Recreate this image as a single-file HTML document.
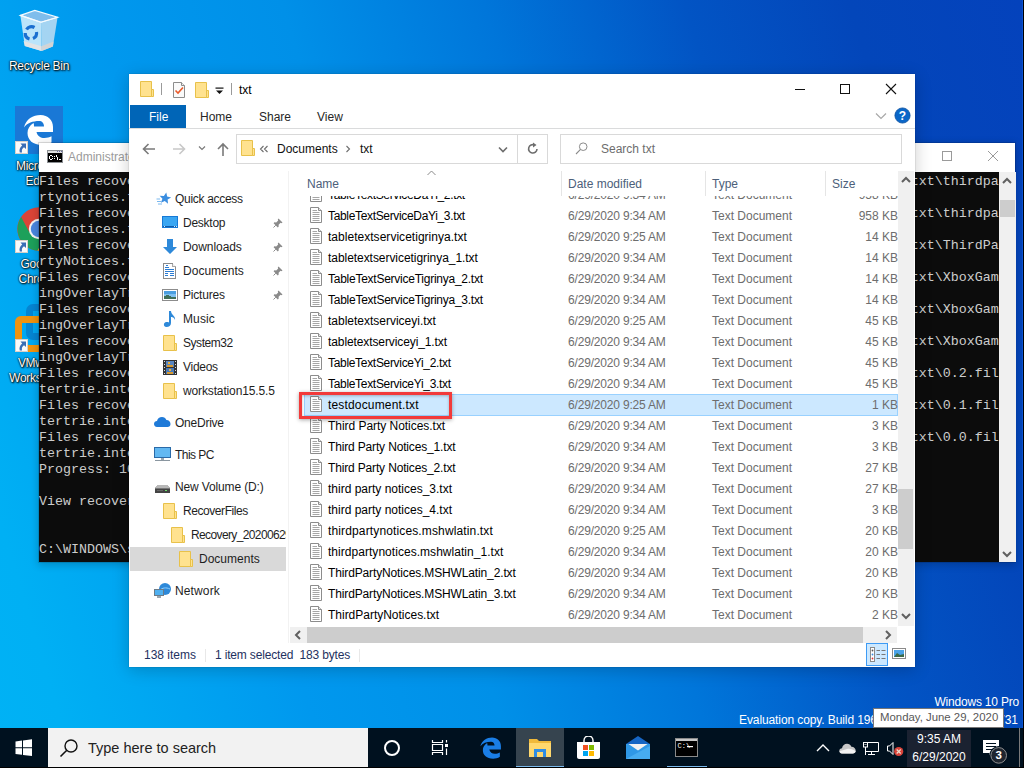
<!DOCTYPE html>
<html><head><meta charset="utf-8"><style>
*{margin:0;padding:0;box-sizing:border-box}
html,body{width:1024px;height:768px;overflow:hidden}
body{position:relative;font-family:"Liberation Sans",sans-serif;font-size:12px;
background:linear-gradient(73deg,#00b2f5 0%,#00b0f4 6%,#0098ee 26%,#0090e8 41%,#0076da 57%,#0254c4 73%,#0346ba 86%,#0442bc 100%);}
.a{position:absolute}
.w{white-space:pre}
.dl{position:absolute;color:#fff;text-align:center;font-size:12px;line-height:15px;letter-spacing:-0.3px;text-shadow:0 0 2px #000,1px 1px 2px #000,0 0 1px #000;width:76px}
</style></head><body>


<svg class="a" style="left:16px;top:6px" width="46" height="48" viewBox="0 0 46 48">
 <path d="M4.4 9.4 L25 16.2 L25.6 45 L8.8 40 Z" fill="#eaf5fc" fill-opacity="0.8"/>
 <path d="M25 16.2 L41.6 11.2 L36.9 40.6 L25.6 45 Z" fill="#d2e4f2" fill-opacity="0.78"/>
 <path d="M4.4 9.4 L18.8 4.4 L41.6 11.2 L25 16.2 Z" fill="#7fbdec" stroke="#f4fbff" stroke-width="1.2"/>
 <path d="M7.6 35 L25.4 40.2 L25.6 45 L8.8 40 Z" fill="#e2e4e6"/>
 <path d="M25.4 40.2 L37.6 35.6 L36.9 40.6 L25.6 45 Z" fill="#d2d4d6"/>
 <path d="M4.4 9.4 L25 16.2 L41.6 11.2" stroke="#f6fbff" stroke-width="1.2" fill="none"/>
 <g stroke="#1a6fd0" stroke-width="3.2" fill="none">
  <path d="M10.5 23.5 A6 6 0 0 1 18.5 21.5"/>
  <path d="M20.5 26 A6 6 0 0 1 17 32.5"/>
  <path d="M13.5 33 A6 6 0 0 1 9.2 27"/>
 </g>
</svg>
<div class="dl" style="left:1px;top:59px">Recycle Bin</div>

<div class="a" style="left:15px;top:106px;width:48px;height:48px;background:#1a78d6"></div>
<svg class="a" style="left:15px;top:106px" width="48" height="48" viewBox="0 0 48 48">
 <path d="M9 21.5 C11 13 18 9 25.5 9 C33 9 38 14 38 21 L38 26 L21.5 26 C22.5 30 25.5 32 29.5 32 C32 32 34.5 31.5 36.5 30.3 L36.5 36.5 C33.5 38.5 30.5 39 27 39 C18 39 12.5 34 12.5 27 C12.5 23 14.5 19.5 18.5 17 C19 18 19 19 19 20.5 L29 20.5 C29 17 27 15 24 15 C18 15 12 17 9 21.5 Z" fill="#fff"/>
</svg>
<div class="a" style="left:15px;top:141px;width:13px;height:13px;background:#fafafa;border:1px solid #d8d0c8"></div><svg class="a" style="left:16px;top:142px" width="11" height="11" viewBox="0 0 11 11"><path d="M4.5 1.5H10V7L8 5.2C6.3 6.3 5.5 8 6 10.5H3.8C3 7.8 3.8 5 6.2 3.4Z" fill="#3a6db5"/></svg>
<div class="dl" style="left:1px;top:159px">Microsoft<br>Edge</div>

<svg class="a" style="left:17px;top:207px" width="44" height="44" viewBox="0 0 44 44">
 <circle cx="22" cy="22" r="21.7" fill="#db4437"/>
 <path d="M4.2 10 L12.2 25 L22 22 L29.5 29 L20.5 43.6 A21.7 21.7 0 0 1 4.2 10 Z" fill="#1da05a"/>
 <path d="M20.5 43.6 L29.5 29 L22 22 L24.3 12.1 L41.5 12.5 A21.7 21.7 0 0 1 20.5 43.6 Z" fill="#fcc934"/>
 <circle cx="22" cy="22" r="10.2" fill="#f4f4f4"/><circle cx="22" cy="22" r="8.2" fill="#4a86e0"/>
</svg>
<div class="a" style="left:15px;top:240px;width:13px;height:13px;background:#fafafa;border:1px solid #d8d0c8"></div><svg class="a" style="left:16px;top:241px" width="11" height="11" viewBox="0 0 11 11"><path d="M4.5 1.5H10V7L8 5.2C6.3 6.3 5.5 8 6 10.5H3.8C3 7.8 3.8 5 6.2 3.4Z" fill="#3a6db5"/></svg>
<div class="dl" style="left:1px;top:257px">Google<br>Chrome</div>

<div class="a" style="left:26px;top:304px;width:36px;height:36px;border-radius:7px;border:7px solid rgba(10,90,170,.45)"></div>
<div class="a" style="left:15px;top:316px;width:36px;height:36px;border-radius:6px;border:7px solid #f0930f"></div>
<div class="a" style="left:15px;top:339px;width:13px;height:13px;background:#fafafa;border:1px solid #d8d0c8"></div><svg class="a" style="left:16px;top:340px" width="11" height="11" viewBox="0 0 11 11"><path d="M4.5 1.5H10V7L8 5.2C6.3 6.3 5.5 8 6 10.5H3.8C3 7.8 3.8 5 6.2 3.4Z" fill="#3a6db5"/></svg>
<div class="dl" style="left:1px;top:356px">VMware<br>Workstation</div>


<div class="a" style="left:38px;top:142px;width:978px;height:421px;background:#fff;background-clip:padding-box;border:1px solid rgba(0,0,0,.12);box-shadow:0 2px 8px rgba(0,0,0,.2)">
</div>
<svg class="a" style="left:47px;top:150px" width="16" height="13" viewBox="0 0 16 13" shape-rendering="crispEdges"><rect x="0" y="0" width="16" height="13" fill="#8a8e92"/><rect x="1" y="1" width="14" height="2" fill="#dcdcdc"/><rect x="10" y="1" width="1" height="1" fill="#6a6aa8"/><rect x="12" y="1" width="1" height="1" fill="#6a6aa8"/><rect x="14" y="1" width="1" height="1" fill="#6a6aa8"/><rect x="1" y="3" width="14" height="9" fill="#000"/><g fill="#fff"><rect x="3" y="5" width="2" height="1"/><rect x="2" y="6" width="1" height="3"/><rect x="3" y="9" width="2" height="1"/><rect x="5" y="6" width="1" height="1"/><rect x="5" y="8" width="1" height="1"/><rect x="7" y="6" width="1" height="1"/><rect x="7" y="8" width="1" height="1"/><rect x="9" y="5" width="1" height="2"/><rect x="10" y="7" width="1" height="3"/><rect x="12" y="9" width="2" height="1"/></g></svg>
<div class="a w" style="left:68px;top:149px;font-size:12px;color:#9b9b9b;line-height:17px">Administrator: C:\WINDOWS\system32\cmd.exe - recover.exe</div>
<div class="a" style="left:942px;top:151px;width:10px;height:10px;border:1px solid #9a9a9a"></div>
<svg class="a" style="left:987px;top:150px" width="12" height="12" viewBox="0 0 12 12"><path d="M1 1L11 11M11 1L1 11" stroke="#9a9a9a" stroke-width="1"/></svg>
<div class="a" style="left:39px;top:172px;width:960px;height:390px;background:#0c0c0c;overflow:hidden">
<div class="a w" style="left:0;top:2px;font-family:'Liberation Mono',monospace;font-size:13.33px;line-height:16px;color:#cccccc">Files recovered: D:\RecoverFiles\Recovery_20200629\Documents\xxxxxxxxxxxxxxxxxxxxxxxxxxxxxxxxxxxxxxxxxxxxxxxxtxt\thirdpa
rtynotices.txt
Files recovered: D:\RecoverFiles\Recovery_20200629\Documents\xxxxxxxxxxxxxxxxxxxxxxxxxxxxxxxxxxxxxxxxxxxxxxxxtxt\thirdpa
rtynotices.txt
Files recovered: D:\RecoverFiles\Recovery_20200629\Documents\xxxxxxxxxxxxxxxxxxxxxxxxxxxxxxxxxxxxxxxxxxxxxxxxtxt\ThirdPa
rtyNotices.txt
Files recovered: D:\RecoverFiles\Recovery_20200629\Documents\xxxxxxxxxxxxxxxxxxxxxxxxxxxxxxxxxxxxxxxxxxxxxxxxtxt\XboxGam
ingOverlayTrace.txt
Files recovered: D:\RecoverFiles\Recovery_20200629\Documents\xxxxxxxxxxxxxxxxxxxxxxxxxxxxxxxxxxxxxxxxxxxxxxxxtxt\XboxGam
ingOverlayTrace_1.txt
Files recovered: D:\RecoverFiles\Recovery_20200629\Documents\xxxxxxxxxxxxxxxxxxxxxxxxxxxxxxxxxxxxxxxxxxxxxxxxtxt\XboxGam
ingOverlayTrace_2.txt
Files recovered: D:\RecoverFiles\Recovery_20200629\Documents\xxxxxxxxxxxxxxxxxxxxxxxxxxxxxxxxxxxxxxxxxxxxxxxxtxt\0.2.fil
tertrie.intermediate.txt
Files recovered: D:\RecoverFiles\Recovery_20200629\Documents\xxxxxxxxxxxxxxxxxxxxxxxxxxxxxxxxxxxxxxxxxxxxxxxxtxt\0.1.fil
tertrie.intermediate.txt
Files recovered: D:\RecoverFiles\Recovery_20200629\Documents\xxxxxxxxxxxxxxxxxxxxxxxxxxxxxxxxxxxxxxxxxxxxxxxxtxt\0.0.fil
tertrie.intermediate.txt
Progress: 100%

View recovered files in D:\RecoverFiles


C:\WINDOWS\system32&gt;
</div></div>
<div class="a" style="left:999px;top:172px;width:17px;height:390px;background:#f0f0f0"></div>
<svg class="a" style="left:1002px;top:177px" width="10" height="8" viewBox="0 0 10 8"><path d="M1 6L5 2L9 6" stroke="#606060" stroke-width="2" fill="none"/></svg>
<div class="a" style="left:1000px;top:200px;width:15px;height:17px;background:#cdcdcd"></div>
<svg class="a" style="left:1002px;top:550px" width="10" height="8" viewBox="0 0 10 8"><path d="M1 2L5 6L9 2" stroke="#606060" stroke-width="2" fill="none"/></svg>


<div class="a" style="left:129px;top:74px;width:786px;height:593px;background:#fff;box-shadow:0 0 1px rgba(0,0,0,.35),0 3px 16px rgba(0,0,0,.2)"></div>

<div class="a" style="left:140px;top:81px"><svg width="14" height="16" viewBox="0 0 14 16"><path d="M0.5 0.5H11.5V15.5H0.5Z" fill="#ffe28f" stroke="#e8c14a"/><path d="M11.5 8.5H13.5V15.5H11.5Z" fill="#ffe28f" stroke="#e8c14a"/></svg></div>
<div class="a" style="left:161px;top:83px;width:1px;height:12px;background:#9a9a9a"></div>
<svg class="a" style="left:173px;top:82px" width="12" height="16" viewBox="0 0 12 16"><path d="M0.5 0.5H8.5L11.5 3.5V15.5H0.5Z" fill="#fafafa" stroke="#8c8c8c"/><path d="M8.5 0.5V3.5H11.5" fill="#eee" stroke="#8c8c8c"/><path d="M2.5 8.5L5 11L10 5.5" stroke="#ea5a2a" stroke-width="1.6" fill="none"/></svg>
<div class="a" style="left:195px;top:82px"><svg width="14" height="16" viewBox="0 0 14 16"><path d="M0.5 0.5H11.5V15.5H0.5Z" fill="#ffe28f" stroke="#e8c14a"/><path d="M11.5 8.5H13.5V15.5H11.5Z" fill="#ffe28f" stroke="#e8c14a"/></svg></div>
<svg class="a" style="left:215px;top:87px" width="9" height="8" viewBox="0 0 9 8"><rect x="0.5" y="0.5" width="8" height="1.2" fill="#111"/><path d="M1 3.5H8L4.5 7Z" fill="#111"/></svg>
<div class="a" style="left:231px;top:83px;width:1px;height:12px;background:#9a9a9a"></div>
<div class="a w" style="left:239px;top:82px;font-size:12px;line-height:17px;color:#000">txt</div>
<div class="a" style="left:795px;top:89px;width:10px;height:1px;background:#111"></div>
<div class="a" style="left:840px;top:84px;width:10px;height:10px;border:1px solid #111"></div>
<svg class="a" style="left:885px;top:83px" width="12" height="12" viewBox="0 0 12 12"><path d="M1 1L11 11M11 1L1 11" stroke="#111" stroke-width="1.1"/></svg>
<div class="a" style="left:130px;top:105px;width:56px;height:23px;background:#0065b7"></div>
<div class="a w" style="left:149px;top:109px;color:#fff;line-height:17px">File</div>
<div class="a w" style="left:200px;top:109px;color:#262626;line-height:17px">Home</div>
<div class="a w" style="left:259px;top:109px;color:#262626;line-height:17px">Share</div>
<div class="a w" style="left:317px;top:109px;color:#262626;line-height:17px">View</div>
<svg class="a" style="left:875px;top:112px" width="12" height="8" viewBox="0 0 12 8"><path d="M1 1.5L6 6.5L11 1.5" stroke="#a8a8a8" stroke-width="1.2" fill="none"/></svg>
<svg class="a" style="left:894px;top:107px" width="17" height="17" viewBox="0 0 17 17"><circle cx="8.5" cy="8.5" r="7.6" fill="#0a66c8" stroke="#0a4f9e" stroke-width="0.8"/><text x="8.5" y="13" text-anchor="middle" font-family="Liberation Sans" font-weight="bold" font-size="12" fill="#fff">?</text></svg>
<div class="a" style="left:129px;top:128px;width:786px;height:1px;background:#dadbdc"></div>
<svg class="a" style="left:141px;top:141px" width="16" height="16" viewBox="0 0 16 16"><path d="M14 8H2.5M7.5 3L2.5 8L7.5 13" stroke="#7a7a7a" stroke-width="1.6" fill="none"/></svg>
<svg class="a" style="left:171px;top:141px" width="16" height="16" viewBox="0 0 16 16"><path d="M2 8H13.5M8.5 3L13.5 8L8.5 13" stroke="#c8c8c8" stroke-width="1.6" fill="none"/></svg>
<svg class="a" style="left:198px;top:145px" width="8" height="6" viewBox="0 0 8 6"><path d="M1 1.5L4 4.5L7 1.5" stroke="#7a7a7a" stroke-width="1.2" fill="none"/></svg>
<svg class="a" style="left:215px;top:142px" width="16" height="16" viewBox="0 0 16 16"><path d="M8 14V2M3 7L8 2L13 7" stroke="#7a7a7a" stroke-width="1.6" fill="none"/></svg>
<div class="a" style="left:236px;top:134px;width:312px;height:30px;border:1px solid #d9d9d9"></div>
<div class="a" style="left:517px;top:135px;width:1px;height:28px;background:#d9d9d9"></div>
<div class="a" style="left:241px;top:140px"><svg width="14" height="16" viewBox="0 0 14 16"><path d="M0.5 0.5H11.5V15.5H0.5Z" fill="#ffe28f" stroke="#e8c14a"/><path d="M11.5 8.5H13.5V15.5H11.5Z" fill="#ffe28f" stroke="#e8c14a"/></svg></div>
<svg class="a" style="left:259px;top:145px" width="10" height="8" viewBox="0 0 10 8"><path d="M4.5 1L1.5 4L4.5 7M8.5 1L5.5 4L8.5 7" stroke="#6d6d6d" stroke-width="1.1" fill="none"/></svg>
<div class="a w" style="left:277px;top:141px;color:#111;line-height:17px">Documents</div>
<svg class="a" style="left:345px;top:145px" width="6" height="8" viewBox="0 0 6 8"><path d="M1.5 1L4.5 4L1.5 7" stroke="#6d6d6d" stroke-width="1.1" fill="none"/></svg>
<div class="a w" style="left:360px;top:141px;color:#111;line-height:17px">txt</div>
<svg class="a" style="left:498px;top:146px" width="10" height="7" viewBox="0 0 10 7"><path d="M1 1.5L5 5.5L9 1.5" stroke="#6d6d6d" stroke-width="1.6" fill="none"/></svg>
<svg class="a" style="left:526px;top:142px" width="14" height="14" viewBox="0 0 14 14"><path d="M11 7A4.2 4.2 0 1 1 8.5 3" stroke="#6d6d6d" stroke-width="1.6" fill="none"/><path d="M7 0.5L10.5 3L7 5.5Z" fill="#6d6d6d"/></svg>
<div class="a" style="left:560px;top:134px;width:342px;height:30px;border:1px solid #d9d9d9"></div>
<svg class="a" style="left:575px;top:141px" width="14" height="14" viewBox="0 0 14 14"><circle cx="8.2" cy="5.7" r="3.8" stroke="#8a8a8a" stroke-width="1" fill="none"/><path d="M5.5 8.4L1 13" stroke="#8a8a8a" stroke-width="1.1"/></svg>
<div class="a w" style="left:601px;top:141px;color:#6d6d6d;line-height:17px">Search txt</div>
<div class="a" style="left:130px;top:547px;width:156px;height:24px;background:#d9d9d9"></div>
<div class="a" style="left:129px;top:171px;width:157px;height:472px;overflow:hidden">
<div class="a w" style="left:46px;top:20px;color:#1e1e1e;line-height:17px;letter-spacing:-0.306px">Quick access</div>
<svg class="a" style="left:27px;top:21px" width="16" height="14" viewBox="0 0 16 14"><path d="M9.5 0.3L10.9 4.3L15 4.6L11.8 7.2L12.8 11.3L9.2 9L5.6 11.3L6.6 7.2L3.4 4.6L7.6 4.3Z" fill="#3b8ee0" transform="rotate(8 9 6)"/><path d="M0.5 7H4M1 9.5H5M2 12H6" stroke="#7ab8ee" stroke-width="1"/></svg>
<div class="a w" style="left:54px;top:44px;color:#1e1e1e;line-height:17px;letter-spacing:-0.247px">Desktop</div>
<svg class="a" style="left:33px;top:45px" width="16" height="12" viewBox="0 0 16 12" shape-rendering="crispEdges"><rect x="0" y="0" width="16" height="12" fill="#1679d6"/><rect x="1" y="1" width="14" height="9" fill="#3aa6f2"/><rect x="1" y="10" width="14" height="1" fill="#0f5aa8"/><rect x="2" y="10" width="1" height="1" fill="#cfe8ff"/><rect x="12" y="10" width="1" height="1" fill="#cfe8ff"/><rect x="14" y="10" width="1" height="1" fill="#cfe8ff"/></svg>
<svg class="a" style="left:144px;top:47px" width="10" height="10" viewBox="0 0 10 10"><path d="M5.5 0.5L9.5 4.5L8.5 5.2L7.6 4.8L5.6 6.8L5.7 8.6L4.8 9.4L0.6 5.2L1.4 4.3L3.2 4.4L5.2 2.4L4.8 1.5Z" fill="#8a8a8a"/><path d="M2.8 7.2L0.5 9.5" stroke="#8a8a8a"/></svg>
<div class="a w" style="left:54px;top:68px;color:#1e1e1e;line-height:17px;letter-spacing:-0.065px">Downloads</div>
<svg class="a" style="left:33px;top:68px" width="16" height="16" viewBox="0 0 16 16"><path d="M5 0H11V8H15L8 15L1 8H5Z" fill="#2e89d9"/></svg>
<svg class="a" style="left:144px;top:71px" width="10" height="10" viewBox="0 0 10 10"><path d="M5.5 0.5L9.5 4.5L8.5 5.2L7.6 4.8L5.6 6.8L5.7 8.6L4.8 9.4L0.6 5.2L1.4 4.3L3.2 4.4L5.2 2.4L4.8 1.5Z" fill="#8a8a8a"/><path d="M2.8 7.2L0.5 9.5" stroke="#8a8a8a"/></svg>
<div class="a w" style="left:54px;top:92px;color:#1e1e1e;line-height:17px;letter-spacing:0.022px">Documents</div>
<svg class="a" style="left:34px;top:92px" width="13" height="16" viewBox="0 0 13 16" shape-rendering="crispEdges"><path d="M0.5 0.5H9.5L12.5 3.5V15.5H0.5Z" fill="#fff" stroke="#8c8c8c"/><path d="M9.5 0.5V3.5H12.5" fill="#eee" stroke="#aaa"/><path d="M3 2.5H5M2 4.5H6M2 6.5H11M2 8.5H11M2 10.5H5M7 10.5H11M2 12.5H5M7 12.5H11" stroke="#2b7cd3"/></svg>
<svg class="a" style="left:144px;top:95px" width="10" height="10" viewBox="0 0 10 10"><path d="M5.5 0.5L9.5 4.5L8.5 5.2L7.6 4.8L5.6 6.8L5.7 8.6L4.8 9.4L0.6 5.2L1.4 4.3L3.2 4.4L5.2 2.4L4.8 1.5Z" fill="#8a8a8a"/><path d="M2.8 7.2L0.5 9.5" stroke="#8a8a8a"/></svg>
<div class="a w" style="left:54px;top:116px;color:#1e1e1e;line-height:17px;letter-spacing:-0.207px">Pictures</div>
<svg class="a" style="left:33px;top:118px" width="16" height="12" viewBox="0 0 16 12" shape-rendering="crispEdges"><rect x="0.5" y="0.5" width="15" height="11" fill="#fff" stroke="#8c8c8c"/><rect x="2" y="2" width="12" height="8" fill="#7fc0f0"/><rect x="2" y="2" width="12" height="3" fill="#4a9ee0"/><path d="M2 10V7L6 6L10 8L14 8V10Z" fill="#3f6f5a"/></svg>
<svg class="a" style="left:144px;top:119px" width="10" height="10" viewBox="0 0 10 10"><path d="M5.5 0.5L9.5 4.5L8.5 5.2L7.6 4.8L5.6 6.8L5.7 8.6L4.8 9.4L0.6 5.2L1.4 4.3L3.2 4.4L5.2 2.4L4.8 1.5Z" fill="#8a8a8a"/><path d="M2.8 7.2L0.5 9.5" stroke="#8a8a8a"/></svg>
<div class="a w" style="left:54px;top:140px;color:#1e1e1e;line-height:17px;letter-spacing:0.112px">Music</div>
<svg class="a" style="left:34px;top:140px" width="14" height="16" viewBox="0 0 14 16"><path d="M6 0H8C8 4 13 5 12 9C11 6 9 6 8 6V12C8 14.5 6 16 3.5 16C1.5 16 0.5 14.5 1 13C1.5 11 4 10.5 6 11.5Z" fill="#2e89d9"/></svg>
<div class="a w" style="left:54px;top:164px;color:#1e1e1e;line-height:17px;letter-spacing:-0.445px">System32</div>
<div class="a" style="left:34px;top:164px"><svg width="14" height="16" viewBox="0 0 14 16"><path d="M0.5 0.5H11.5V15.5H0.5Z" fill="#ffe28f" stroke="#e8c14a"/><path d="M11.5 8.5H13.5V15.5H11.5Z" fill="#ffe28f" stroke="#e8c14a"/></svg></div>
<div class="a w" style="left:54px;top:188px;color:#1e1e1e;line-height:17px;letter-spacing:-0.281px">Videos</div>
<svg class="a" style="left:34px;top:189px" width="14" height="15" viewBox="0 0 14 15" shape-rendering="crispEdges"><rect x="0" y="0" width="14" height="15" fill="#333"/><path d="M1 1.5H2M1 4.5H2M1 7.5H2M1 10.5H2M1 13.5H2M12 1.5H13M12 4.5H13M12 7.5H13M12 10.5H13M12 13.5H13" stroke="#ddd"/><rect x="3" y="1" width="8" height="6" fill="#5a86c0"/><rect x="3" y="8" width="8" height="6" fill="#4a7ab8"/><path d="M4 5H10V7H4Z M4 12H10V14H4Z" fill="#d89a30"/><rect x="5" y="2" width="2" height="2" fill="#e8b040"/><rect x="6" y="9" width="2" height="2" fill="#e8b040"/></svg>
<div class="a w" style="left:54px;top:212px;color:#1e1e1e;line-height:17px;letter-spacing:-0.137px">workstation15.5.5</div>
<div class="a" style="left:34px;top:212px"><svg width="14" height="16" viewBox="0 0 14 16"><path d="M0.5 0.5H11.5V15.5H0.5Z" fill="#ffe28f" stroke="#e8c14a"/><path d="M11.5 8.5H13.5V15.5H11.5Z" fill="#ffe28f" stroke="#e8c14a"/></svg></div>
<div class="a w" style="left:46px;top:244px;color:#1e1e1e;line-height:17px;letter-spacing:-0.237px">OneDrive</div>
<svg class="a" style="left:25px;top:245px" width="17" height="11" viewBox="0 0 17 11"><path d="M3 11C1 11 0 9.5 0 8C0 6.3 1.4 5 3 5C3.5 2.5 5.5 1 8 1C10 1 11.7 2.2 12.4 4C15 4 16.5 6 16.5 8C16.5 9.8 15.3 11 13.5 11Z" fill="#1f7ad8"/></svg>
<div class="a w" style="left:46px;top:276px;color:#1e1e1e;line-height:17px;letter-spacing:-0.526px">This PC</div>
<svg class="a" style="left:25px;top:276px" width="17" height="16" viewBox="0 0 17 16" shape-rendering="crispEdges"><rect x="0.5" y="0.5" width="16" height="10" fill="#62b8f2" stroke="#2a6aa8"/><rect x="7" y="11" width="3" height="2" fill="#9aa6b0"/><rect x="1" y="13" width="15" height="1" fill="#8a96a0"/></svg>
<div class="a w" style="left:46px;top:308px;color:#1e1e1e;line-height:17px;letter-spacing:-0.134px">New Volume (D:)</div>
<svg class="a" style="left:26px;top:314px" width="15" height="8" viewBox="0 0 15 8" shape-rendering="crispEdges"><path d="M2 0H13L15 3V8H0V3Z" fill="#b8b8b8"/><rect x="0" y="3" width="15" height="5" fill="#444"/><rect x="0" y="3" width="15" height="1" fill="#777"/><rect x="10" y="5" width="2" height="1" fill="#6ee06a"/><rect x="2" y="5" width="6" height="1" fill="#666"/></svg>
<div class="a w" style="left:54px;top:332px;color:#1e1e1e;line-height:17px;letter-spacing:-0.436px">RecoverFiles</div>
<div class="a" style="left:34px;top:332px"><svg width="14" height="16" viewBox="0 0 14 16"><path d="M0.5 0.5H11.5V15.5H0.5Z" fill="#ffe28f" stroke="#e8c14a"/><path d="M11.5 8.5H13.5V15.5H11.5Z" fill="#ffe28f" stroke="#e8c14a"/></svg></div>
<div class="a w" style="left:62px;top:356px;color:#1e1e1e;line-height:17px;letter-spacing:-0.625px">Recovery_20200629_093218</div>
<div class="a" style="left:42px;top:356px"><svg width="14" height="16" viewBox="0 0 14 16"><path d="M0.5 0.5H11.5V15.5H0.5Z" fill="#ffe28f" stroke="#e8c14a"/><path d="M11.5 8.5H13.5V15.5H11.5Z" fill="#ffe28f" stroke="#e8c14a"/></svg></div>
<div class="a w" style="left:70px;top:380px;color:#1e1e1e;line-height:17px;letter-spacing:0.011px">Documents</div>
<div class="a" style="left:50px;top:380px"><svg width="14" height="16" viewBox="0 0 14 16"><path d="M0.5 0.5H11.5V15.5H0.5Z" fill="#ffe28f" stroke="#e8c14a"/><path d="M11.5 8.5H13.5V15.5H11.5Z" fill="#ffe28f" stroke="#e8c14a"/></svg></div>
<div class="a w" style="left:46px;top:412px;color:#1e1e1e;line-height:17px;letter-spacing:0.126px">Network</div>
<svg class="a" style="left:25px;top:412px" width="17" height="16" viewBox="0 0 17 16"><circle cx="11" cy="6" r="6" fill="#2e89d9"/><path d="M6 7C8 5 12 4 16 6" stroke="#8fd0ff" fill="none"/><rect x="0.5" y="6.5" width="9" height="6" fill="#4fb0f0" stroke="#6b7b88"/><rect x="3" y="13" width="4" height="2" fill="#9aa6b0"/></svg>
</div>
<div class="a" style="left:288px;top:171px;width:1px;height:472px;background:#f2f2f2"></div>
<svg class="a" style="left:427px;top:170px" width="9" height="6" viewBox="0 0 9 6"><path d="M0.5 5L4.5 1L8.5 5" stroke="#8a8a8a" stroke-width="1" fill="none"/></svg>
<div class="a w" style="left:307px;top:176px;color:#4c607a;line-height:17px">Name</div>
<div class="a w" style="left:568px;top:176px;color:#4c607a;line-height:17px">Date modified</div>
<div class="a w" style="left:712px;top:176px;color:#4c607a;line-height:17px">Type</div>
<div class="a w" style="left:832px;top:176px;color:#4c607a;line-height:17px">Size</div>
<div class="a" style="left:561px;top:171px;width:1px;height:25px;background:#e5e5e5"></div>
<div class="a" style="left:705px;top:171px;width:1px;height:25px;background:#e5e5e5"></div>
<div class="a" style="left:825px;top:171px;width:1px;height:25px;background:#e5e5e5"></div>
<div class="a" style="left:290px;top:196px;width:608px;height:431px;overflow:hidden">
<div class="a" style="left:20px;top:-10px"><svg width="12" height="16" viewBox="0 0 12 16"><path d="M0.5 0.5H8.5L11.5 3.5V15.5H0.5Z" fill="#fff" stroke="#8c8c8c"/><path d="M8.5 0.5V3.5H11.5" fill="#e6e6e6" stroke="#8c8c8c"/><path d="M2.5 3.5H7M2.5 5.5H9.5M2.5 7.5H9.5M2.5 9.5H9.5M2.5 11.5H9.5M2.5 13.5H9.5" stroke="#a6a6a6"/></svg></div>
<div class="a w" style="left:38px;top:-9px;color:#000;line-height:17px;letter-spacing:-0.337px">TableTextServiceDaYi_2.txt</div>
<div class="a w" style="left:278px;top:-9px;color:#6d6d6d;line-height:17px;letter-spacing:-0.18px">6/29/2020 9:34 AM</div>
<div class="a w" style="left:422px;top:-9px;color:#6d6d6d;line-height:17px">Text Document</div>
<div class="a w" style="left:508px;top:-9px;width:100px;text-align:right;color:#6d6d6d;line-height:17px">958 KB</div>
<div class="a" style="left:20px;top:11px"><svg width="12" height="16" viewBox="0 0 12 16"><path d="M0.5 0.5H8.5L11.5 3.5V15.5H0.5Z" fill="#fff" stroke="#8c8c8c"/><path d="M8.5 0.5V3.5H11.5" fill="#e6e6e6" stroke="#8c8c8c"/><path d="M2.5 3.5H7M2.5 5.5H9.5M2.5 7.5H9.5M2.5 9.5H9.5M2.5 11.5H9.5M2.5 13.5H9.5" stroke="#a6a6a6"/></svg></div>
<div class="a w" style="left:38px;top:12px;color:#000;line-height:17px;letter-spacing:-0.337px">TableTextServiceDaYi_3.txt</div>
<div class="a w" style="left:278px;top:12px;color:#6d6d6d;line-height:17px;letter-spacing:-0.18px">6/29/2020 9:34 AM</div>
<div class="a w" style="left:422px;top:12px;color:#6d6d6d;line-height:17px">Text Document</div>
<div class="a w" style="left:508px;top:12px;width:100px;text-align:right;color:#6d6d6d;line-height:17px">958 KB</div>
<div class="a" style="left:20px;top:32px"><svg width="12" height="16" viewBox="0 0 12 16"><path d="M0.5 0.5H8.5L11.5 3.5V15.5H0.5Z" fill="#fff" stroke="#8c8c8c"/><path d="M8.5 0.5V3.5H11.5" fill="#e6e6e6" stroke="#8c8c8c"/><path d="M2.5 3.5H7M2.5 5.5H9.5M2.5 7.5H9.5M2.5 9.5H9.5M2.5 11.5H9.5M2.5 13.5H9.5" stroke="#a6a6a6"/></svg></div>
<div class="a w" style="left:38px;top:33px;color:#000;line-height:17px;letter-spacing:0.029px">tabletextservicetigrinya.txt</div>
<div class="a w" style="left:278px;top:33px;color:#6d6d6d;line-height:17px;letter-spacing:-0.18px">6/29/2020 9:25 AM</div>
<div class="a w" style="left:422px;top:33px;color:#6d6d6d;line-height:17px">Text Document</div>
<div class="a w" style="left:508px;top:33px;width:100px;text-align:right;color:#6d6d6d;line-height:17px">14 KB</div>
<div class="a" style="left:20px;top:53px"><svg width="12" height="16" viewBox="0 0 12 16"><path d="M0.5 0.5H8.5L11.5 3.5V15.5H0.5Z" fill="#fff" stroke="#8c8c8c"/><path d="M8.5 0.5V3.5H11.5" fill="#e6e6e6" stroke="#8c8c8c"/><path d="M2.5 3.5H7M2.5 5.5H9.5M2.5 7.5H9.5M2.5 9.5H9.5M2.5 11.5H9.5M2.5 13.5H9.5" stroke="#a6a6a6"/></svg></div>
<div class="a w" style="left:38px;top:54px;color:#000;line-height:17px;letter-spacing:-0.052px">tabletextservicetigrinya_1.txt</div>
<div class="a w" style="left:278px;top:54px;color:#6d6d6d;line-height:17px;letter-spacing:-0.18px">6/29/2020 9:34 AM</div>
<div class="a w" style="left:422px;top:54px;color:#6d6d6d;line-height:17px">Text Document</div>
<div class="a w" style="left:508px;top:54px;width:100px;text-align:right;color:#6d6d6d;line-height:17px">14 KB</div>
<div class="a" style="left:20px;top:74px"><svg width="12" height="16" viewBox="0 0 12 16"><path d="M0.5 0.5H8.5L11.5 3.5V15.5H0.5Z" fill="#fff" stroke="#8c8c8c"/><path d="M8.5 0.5V3.5H11.5" fill="#e6e6e6" stroke="#8c8c8c"/><path d="M2.5 3.5H7M2.5 5.5H9.5M2.5 7.5H9.5M2.5 9.5H9.5M2.5 11.5H9.5M2.5 13.5H9.5" stroke="#a6a6a6"/></svg></div>
<div class="a w" style="left:38px;top:75px;color:#000;line-height:17px;letter-spacing:-0.251px">TableTextServiceTigrinya_2.txt</div>
<div class="a w" style="left:278px;top:75px;color:#6d6d6d;line-height:17px;letter-spacing:-0.18px">6/29/2020 9:34 AM</div>
<div class="a w" style="left:422px;top:75px;color:#6d6d6d;line-height:17px">Text Document</div>
<div class="a w" style="left:508px;top:75px;width:100px;text-align:right;color:#6d6d6d;line-height:17px">14 KB</div>
<div class="a" style="left:20px;top:95px"><svg width="12" height="16" viewBox="0 0 12 16"><path d="M0.5 0.5H8.5L11.5 3.5V15.5H0.5Z" fill="#fff" stroke="#8c8c8c"/><path d="M8.5 0.5V3.5H11.5" fill="#e6e6e6" stroke="#8c8c8c"/><path d="M2.5 3.5H7M2.5 5.5H9.5M2.5 7.5H9.5M2.5 9.5H9.5M2.5 11.5H9.5M2.5 13.5H9.5" stroke="#a6a6a6"/></svg></div>
<div class="a w" style="left:38px;top:96px;color:#000;line-height:17px;letter-spacing:-0.251px">TableTextServiceTigrinya_3.txt</div>
<div class="a w" style="left:278px;top:96px;color:#6d6d6d;line-height:17px;letter-spacing:-0.18px">6/29/2020 9:34 AM</div>
<div class="a w" style="left:422px;top:96px;color:#6d6d6d;line-height:17px">Text Document</div>
<div class="a w" style="left:508px;top:96px;width:100px;text-align:right;color:#6d6d6d;line-height:17px">14 KB</div>
<div class="a" style="left:20px;top:116px"><svg width="12" height="16" viewBox="0 0 12 16"><path d="M0.5 0.5H8.5L11.5 3.5V15.5H0.5Z" fill="#fff" stroke="#8c8c8c"/><path d="M8.5 0.5V3.5H11.5" fill="#e6e6e6" stroke="#8c8c8c"/><path d="M2.5 3.5H7M2.5 5.5H9.5M2.5 7.5H9.5M2.5 9.5H9.5M2.5 11.5H9.5M2.5 13.5H9.5" stroke="#a6a6a6"/></svg></div>
<div class="a w" style="left:38px;top:117px;color:#000;line-height:17px;letter-spacing:-0.008px">tabletextserviceyi.txt</div>
<div class="a w" style="left:278px;top:117px;color:#6d6d6d;line-height:17px;letter-spacing:-0.18px">6/29/2020 9:25 AM</div>
<div class="a w" style="left:422px;top:117px;color:#6d6d6d;line-height:17px">Text Document</div>
<div class="a w" style="left:508px;top:117px;width:100px;text-align:right;color:#6d6d6d;line-height:17px">45 KB</div>
<div class="a" style="left:20px;top:137px"><svg width="12" height="16" viewBox="0 0 12 16"><path d="M0.5 0.5H8.5L11.5 3.5V15.5H0.5Z" fill="#fff" stroke="#8c8c8c"/><path d="M8.5 0.5V3.5H11.5" fill="#e6e6e6" stroke="#8c8c8c"/><path d="M2.5 3.5H7M2.5 5.5H9.5M2.5 7.5H9.5M2.5 9.5H9.5M2.5 11.5H9.5M2.5 13.5H9.5" stroke="#a6a6a6"/></svg></div>
<div class="a w" style="left:38px;top:138px;color:#000;line-height:17px;letter-spacing:-0.101px">tabletextserviceyi_1.txt</div>
<div class="a w" style="left:278px;top:138px;color:#6d6d6d;line-height:17px;letter-spacing:-0.18px">6/29/2020 9:34 AM</div>
<div class="a w" style="left:422px;top:138px;color:#6d6d6d;line-height:17px">Text Document</div>
<div class="a w" style="left:508px;top:138px;width:100px;text-align:right;color:#6d6d6d;line-height:17px">45 KB</div>
<div class="a" style="left:20px;top:158px"><svg width="12" height="16" viewBox="0 0 12 16"><path d="M0.5 0.5H8.5L11.5 3.5V15.5H0.5Z" fill="#fff" stroke="#8c8c8c"/><path d="M8.5 0.5V3.5H11.5" fill="#e6e6e6" stroke="#8c8c8c"/><path d="M2.5 3.5H7M2.5 5.5H9.5M2.5 7.5H9.5M2.5 9.5H9.5M2.5 11.5H9.5M2.5 13.5H9.5" stroke="#a6a6a6"/></svg></div>
<div class="a w" style="left:38px;top:159px;color:#000;line-height:17px;letter-spacing:-0.313px">TableTextServiceYi_2.txt</div>
<div class="a w" style="left:278px;top:159px;color:#6d6d6d;line-height:17px;letter-spacing:-0.18px">6/29/2020 9:34 AM</div>
<div class="a w" style="left:422px;top:159px;color:#6d6d6d;line-height:17px">Text Document</div>
<div class="a w" style="left:508px;top:159px;width:100px;text-align:right;color:#6d6d6d;line-height:17px">45 KB</div>
<div class="a" style="left:20px;top:179px"><svg width="12" height="16" viewBox="0 0 12 16"><path d="M0.5 0.5H8.5L11.5 3.5V15.5H0.5Z" fill="#fff" stroke="#8c8c8c"/><path d="M8.5 0.5V3.5H11.5" fill="#e6e6e6" stroke="#8c8c8c"/><path d="M2.5 3.5H7M2.5 5.5H9.5M2.5 7.5H9.5M2.5 9.5H9.5M2.5 11.5H9.5M2.5 13.5H9.5" stroke="#a6a6a6"/></svg></div>
<div class="a w" style="left:38px;top:180px;color:#000;line-height:17px;letter-spacing:-0.313px">TableTextServiceYi_3.txt</div>
<div class="a w" style="left:278px;top:180px;color:#6d6d6d;line-height:17px;letter-spacing:-0.18px">6/29/2020 9:34 AM</div>
<div class="a w" style="left:422px;top:180px;color:#6d6d6d;line-height:17px">Text Document</div>
<div class="a w" style="left:508px;top:180px;width:100px;text-align:right;color:#6d6d6d;line-height:17px">45 KB</div>
<div class="a" style="left:14px;top:198px;width:594px;height:22px;background:#cce8ff;border:1px solid #99d1ff"></div>
<div class="a" style="left:20px;top:200px"><svg width="12" height="16" viewBox="0 0 12 16"><path d="M0.5 0.5H8.5L11.5 3.5V15.5H0.5Z" fill="#fff" stroke="#8c8c8c"/><path d="M8.5 0.5V3.5H11.5" fill="#e6e6e6" stroke="#8c8c8c"/><path d="M2.5 3.5H7M2.5 5.5H9.5M2.5 7.5H9.5M2.5 9.5H9.5M2.5 11.5H9.5M2.5 13.5H9.5" stroke="#a6a6a6"/></svg></div>
<div class="a w" style="left:38px;top:201px;color:#000;line-height:17px;letter-spacing:0.168px">testdocument.txt</div>
<div class="a w" style="left:278px;top:201px;color:#6d6d6d;line-height:17px;letter-spacing:-0.18px">6/29/2020 9:25 AM</div>
<div class="a w" style="left:422px;top:201px;color:#6d6d6d;line-height:17px">Text Document</div>
<div class="a w" style="left:508px;top:201px;width:100px;text-align:right;color:#6d6d6d;line-height:17px">1 KB</div>
<div class="a" style="left:20px;top:221px"><svg width="12" height="16" viewBox="0 0 12 16"><path d="M0.5 0.5H8.5L11.5 3.5V15.5H0.5Z" fill="#fff" stroke="#8c8c8c"/><path d="M8.5 0.5V3.5H11.5" fill="#e6e6e6" stroke="#8c8c8c"/><path d="M2.5 3.5H7M2.5 5.5H9.5M2.5 7.5H9.5M2.5 9.5H9.5M2.5 11.5H9.5M2.5 13.5H9.5" stroke="#a6a6a6"/></svg></div>
<div class="a w" style="left:38px;top:222px;color:#000;line-height:17px;letter-spacing:-0.038px">Third Party Notices.txt</div>
<div class="a w" style="left:278px;top:222px;color:#6d6d6d;line-height:17px;letter-spacing:-0.18px">6/29/2020 9:34 AM</div>
<div class="a w" style="left:422px;top:222px;color:#6d6d6d;line-height:17px">Text Document</div>
<div class="a w" style="left:508px;top:222px;width:100px;text-align:right;color:#6d6d6d;line-height:17px">3 KB</div>
<div class="a" style="left:20px;top:242px"><svg width="12" height="16" viewBox="0 0 12 16"><path d="M0.5 0.5H8.5L11.5 3.5V15.5H0.5Z" fill="#fff" stroke="#8c8c8c"/><path d="M8.5 0.5V3.5H11.5" fill="#e6e6e6" stroke="#8c8c8c"/><path d="M2.5 3.5H7M2.5 5.5H9.5M2.5 7.5H9.5M2.5 9.5H9.5M2.5 11.5H9.5M2.5 13.5H9.5" stroke="#a6a6a6"/></svg></div>
<div class="a w" style="left:38px;top:243px;color:#000;line-height:17px;letter-spacing:-0.157px">Third Party Notices_1.txt</div>
<div class="a w" style="left:278px;top:243px;color:#6d6d6d;line-height:17px;letter-spacing:-0.18px">6/29/2020 9:34 AM</div>
<div class="a w" style="left:422px;top:243px;color:#6d6d6d;line-height:17px">Text Document</div>
<div class="a w" style="left:508px;top:243px;width:100px;text-align:right;color:#6d6d6d;line-height:17px">3 KB</div>
<div class="a" style="left:20px;top:263px"><svg width="12" height="16" viewBox="0 0 12 16"><path d="M0.5 0.5H8.5L11.5 3.5V15.5H0.5Z" fill="#fff" stroke="#8c8c8c"/><path d="M8.5 0.5V3.5H11.5" fill="#e6e6e6" stroke="#8c8c8c"/><path d="M2.5 3.5H7M2.5 5.5H9.5M2.5 7.5H9.5M2.5 9.5H9.5M2.5 11.5H9.5M2.5 13.5H9.5" stroke="#a6a6a6"/></svg></div>
<div class="a w" style="left:38px;top:264px;color:#000;line-height:17px;letter-spacing:-0.157px">Third Party Notices_2.txt</div>
<div class="a w" style="left:278px;top:264px;color:#6d6d6d;line-height:17px;letter-spacing:-0.18px">6/29/2020 9:34 AM</div>
<div class="a w" style="left:422px;top:264px;color:#6d6d6d;line-height:17px">Text Document</div>
<div class="a w" style="left:508px;top:264px;width:100px;text-align:right;color:#6d6d6d;line-height:17px">27 KB</div>
<div class="a" style="left:20px;top:284px"><svg width="12" height="16" viewBox="0 0 12 16"><path d="M0.5 0.5H8.5L11.5 3.5V15.5H0.5Z" fill="#fff" stroke="#8c8c8c"/><path d="M8.5 0.5V3.5H11.5" fill="#e6e6e6" stroke="#8c8c8c"/><path d="M2.5 3.5H7M2.5 5.5H9.5M2.5 7.5H9.5M2.5 9.5H9.5M2.5 11.5H9.5M2.5 13.5H9.5" stroke="#a6a6a6"/></svg></div>
<div class="a w" style="left:38px;top:285px;color:#000;line-height:17px;letter-spacing:-0.004px">third party notices_3.txt</div>
<div class="a w" style="left:278px;top:285px;color:#6d6d6d;line-height:17px;letter-spacing:-0.18px">6/29/2020 9:34 AM</div>
<div class="a w" style="left:422px;top:285px;color:#6d6d6d;line-height:17px">Text Document</div>
<div class="a w" style="left:508px;top:285px;width:100px;text-align:right;color:#6d6d6d;line-height:17px">27 KB</div>
<div class="a" style="left:20px;top:305px"><svg width="12" height="16" viewBox="0 0 12 16"><path d="M0.5 0.5H8.5L11.5 3.5V15.5H0.5Z" fill="#fff" stroke="#8c8c8c"/><path d="M8.5 0.5V3.5H11.5" fill="#e6e6e6" stroke="#8c8c8c"/><path d="M2.5 3.5H7M2.5 5.5H9.5M2.5 7.5H9.5M2.5 9.5H9.5M2.5 11.5H9.5M2.5 13.5H9.5" stroke="#a6a6a6"/></svg></div>
<div class="a w" style="left:38px;top:306px;color:#000;line-height:17px;letter-spacing:-0.004px">third party notices_4.txt</div>
<div class="a w" style="left:278px;top:306px;color:#6d6d6d;line-height:17px;letter-spacing:-0.18px">6/29/2020 9:34 AM</div>
<div class="a w" style="left:422px;top:306px;color:#6d6d6d;line-height:17px">Text Document</div>
<div class="a w" style="left:508px;top:306px;width:100px;text-align:right;color:#6d6d6d;line-height:17px">3 KB</div>
<div class="a" style="left:20px;top:326px"><svg width="12" height="16" viewBox="0 0 12 16"><path d="M0.5 0.5H8.5L11.5 3.5V15.5H0.5Z" fill="#fff" stroke="#8c8c8c"/><path d="M8.5 0.5V3.5H11.5" fill="#e6e6e6" stroke="#8c8c8c"/><path d="M2.5 3.5H7M2.5 5.5H9.5M2.5 7.5H9.5M2.5 9.5H9.5M2.5 11.5H9.5M2.5 13.5H9.5" stroke="#a6a6a6"/></svg></div>
<div class="a w" style="left:38px;top:327px;color:#000;line-height:17px;letter-spacing:0.136px">thirdpartynotices.mshwlatin.txt</div>
<div class="a w" style="left:278px;top:327px;color:#6d6d6d;line-height:17px;letter-spacing:-0.18px">6/29/2020 9:25 AM</div>
<div class="a w" style="left:422px;top:327px;color:#6d6d6d;line-height:17px">Text Document</div>
<div class="a w" style="left:508px;top:327px;width:100px;text-align:right;color:#6d6d6d;line-height:17px">20 KB</div>
<div class="a" style="left:20px;top:347px"><svg width="12" height="16" viewBox="0 0 12 16"><path d="M0.5 0.5H8.5L11.5 3.5V15.5H0.5Z" fill="#fff" stroke="#8c8c8c"/><path d="M8.5 0.5V3.5H11.5" fill="#e6e6e6" stroke="#8c8c8c"/><path d="M2.5 3.5H7M2.5 5.5H9.5M2.5 7.5H9.5M2.5 9.5H9.5M2.5 11.5H9.5M2.5 13.5H9.5" stroke="#a6a6a6"/></svg></div>
<div class="a w" style="left:38px;top:348px;color:#000;line-height:17px;letter-spacing:0.039px">thirdpartynotices.mshwlatin_1.txt</div>
<div class="a w" style="left:278px;top:348px;color:#6d6d6d;line-height:17px;letter-spacing:-0.18px">6/29/2020 9:34 AM</div>
<div class="a w" style="left:422px;top:348px;color:#6d6d6d;line-height:17px">Text Document</div>
<div class="a w" style="left:508px;top:348px;width:100px;text-align:right;color:#6d6d6d;line-height:17px">20 KB</div>
<div class="a" style="left:20px;top:368px"><svg width="12" height="16" viewBox="0 0 12 16"><path d="M0.5 0.5H8.5L11.5 3.5V15.5H0.5Z" fill="#fff" stroke="#8c8c8c"/><path d="M8.5 0.5V3.5H11.5" fill="#e6e6e6" stroke="#8c8c8c"/><path d="M2.5 3.5H7M2.5 5.5H9.5M2.5 7.5H9.5M2.5 9.5H9.5M2.5 11.5H9.5M2.5 13.5H9.5" stroke="#a6a6a6"/></svg></div>
<div class="a w" style="left:38px;top:369px;color:#000;line-height:17px;letter-spacing:-0.133px">ThirdPartyNotices.MSHWLatin_2.txt</div>
<div class="a w" style="left:278px;top:369px;color:#6d6d6d;line-height:17px;letter-spacing:-0.18px">6/29/2020 9:34 AM</div>
<div class="a w" style="left:422px;top:369px;color:#6d6d6d;line-height:17px">Text Document</div>
<div class="a w" style="left:508px;top:369px;width:100px;text-align:right;color:#6d6d6d;line-height:17px">20 KB</div>
<div class="a" style="left:20px;top:389px"><svg width="12" height="16" viewBox="0 0 12 16"><path d="M0.5 0.5H8.5L11.5 3.5V15.5H0.5Z" fill="#fff" stroke="#8c8c8c"/><path d="M8.5 0.5V3.5H11.5" fill="#e6e6e6" stroke="#8c8c8c"/><path d="M2.5 3.5H7M2.5 5.5H9.5M2.5 7.5H9.5M2.5 9.5H9.5M2.5 11.5H9.5M2.5 13.5H9.5" stroke="#a6a6a6"/></svg></div>
<div class="a w" style="left:38px;top:390px;color:#000;line-height:17px;letter-spacing:-0.133px">ThirdPartyNotices.MSHWLatin_3.txt</div>
<div class="a w" style="left:278px;top:390px;color:#6d6d6d;line-height:17px;letter-spacing:-0.18px">6/29/2020 9:34 AM</div>
<div class="a w" style="left:422px;top:390px;color:#6d6d6d;line-height:17px">Text Document</div>
<div class="a w" style="left:508px;top:390px;width:100px;text-align:right;color:#6d6d6d;line-height:17px">20 KB</div>
<div class="a" style="left:20px;top:410px"><svg width="12" height="16" viewBox="0 0 12 16"><path d="M0.5 0.5H8.5L11.5 3.5V15.5H0.5Z" fill="#fff" stroke="#8c8c8c"/><path d="M8.5 0.5V3.5H11.5" fill="#e6e6e6" stroke="#8c8c8c"/><path d="M2.5 3.5H7M2.5 5.5H9.5M2.5 7.5H9.5M2.5 9.5H9.5M2.5 11.5H9.5M2.5 13.5H9.5" stroke="#a6a6a6"/></svg></div>
<div class="a w" style="left:38px;top:411px;color:#000;line-height:17px;letter-spacing:-0.014px">ThirdPartyNotices.txt</div>
<div class="a w" style="left:278px;top:411px;color:#6d6d6d;line-height:17px;letter-spacing:-0.18px">6/29/2020 9:34 AM</div>
<div class="a w" style="left:422px;top:411px;color:#6d6d6d;line-height:17px">Text Document</div>
<div class="a w" style="left:508px;top:411px;width:100px;text-align:right;color:#6d6d6d;line-height:17px">2 KB</div>
<div class="a" style="left:20px;top:431px"><svg width="12" height="16" viewBox="0 0 12 16"><path d="M0.5 0.5H8.5L11.5 3.5V15.5H0.5Z" fill="#fff" stroke="#8c8c8c"/><path d="M8.5 0.5V3.5H11.5" fill="#e6e6e6" stroke="#8c8c8c"/><path d="M2.5 3.5H7M2.5 5.5H9.5M2.5 7.5H9.5M2.5 9.5H9.5M2.5 11.5H9.5M2.5 13.5H9.5" stroke="#a6a6a6"/></svg></div>
<div class="a w" style="left:38px;top:432px;color:#000;line-height:17px;letter-spacing:-0.150px">ThirdPartyNotices_1.txt</div>
<div class="a w" style="left:278px;top:432px;color:#6d6d6d;line-height:17px;letter-spacing:-0.18px">6/29/2020 9:34 AM</div>
<div class="a w" style="left:422px;top:432px;color:#6d6d6d;line-height:17px">Text Document</div>
<div class="a w" style="left:508px;top:432px;width:100px;text-align:right;color:#6d6d6d;line-height:17px">2 KB</div>
</div>
<div class="a" style="left:299px;top:392px;width:153px;height:27px;border:3px solid #f23a3a;box-shadow:0 1px 4px rgba(0,0,0,.35), inset 0 1px 3px rgba(0,0,0,.25)"></div>
<div class="a" style="left:898px;top:171px;width:16px;height:455px;background:#f0f0f0"></div>
<svg class="a" style="left:901px;top:176px" width="10" height="8" viewBox="0 0 10 8"><path d="M1 6L5 2L9 6" stroke="#606060" stroke-width="2" fill="none"/></svg>
<div class="a" style="left:898px;top:489px;width:15px;height:60px;background:#cdcdcd"></div>
<svg class="a" style="left:901px;top:612px" width="10" height="8" viewBox="0 0 10 8"><path d="M1 2L5 6L9 2" stroke="#606060" stroke-width="2" fill="none"/></svg>
<div class="a" style="left:290px;top:627px;width:607px;height:16px;background:#f0f0f0"></div>
<div class="a" style="left:307px;top:627px;width:556px;height:16px;background:#cdcdcd"></div>
<svg class="a" style="left:294px;top:630px" width="8" height="10" viewBox="0 0 8 10"><path d="M6 1L2 5L6 9" stroke="#606060" stroke-width="2" fill="none"/></svg>
<svg class="a" style="left:884px;top:630px" width="8" height="10" viewBox="0 0 8 10"><path d="M2 1L6 5L2 9" stroke="#606060" stroke-width="2" fill="none"/></svg>
<div class="a w" style="left:144px;top:647px;color:#1e3160;line-height:17px">138 items</div>
<div class="a" style="left:205px;top:649px;width:1px;height:13px;background:#e8e8e8"></div>
<div class="a w" style="left:215px;top:647px;color:#1e3160;line-height:17px;letter-spacing:-0.17px">1 item selected  183 bytes</div>
<div class="a" style="left:359px;top:649px;width:1px;height:13px;background:#e8e8e8"></div>
<div class="a" style="left:866px;top:643px;width:22px;height:23px;background:#cce8ff;border:1px solid #3d9bf5"></div>
<svg class="a" style="left:870px;top:647px" width="16" height="15" viewBox="0 0 16 15"><rect x="0.5" y="0.5" width="4" height="14" fill="#fff" stroke="#8a8a8a"/><circle cx="2.5" cy="3.5" r="0.9" fill="#555"/><circle cx="2.5" cy="7.5" r="0.9" fill="#3a8ee0"/><circle cx="2.5" cy="11.5" r="0.9" fill="#d33"/><path d="M6.5 3.5H10M11.5 3.5H15.5M6.5 7.5H10M11.5 7.5H15.5M6.5 11.5H10M11.5 11.5H15.5" stroke="#777" stroke-width="1.2"/></svg>
<svg class="a" style="left:892px;top:648px" width="14" height="11" viewBox="0 0 14 11"><rect x="0.5" y="0.5" width="13" height="10" fill="#fff" stroke="#8a8a8a"/><rect x="2" y="2" width="10" height="7" fill="#4aa3e8"/><path d="M2 9L5 5L8 7L12 6V9Z" fill="#3c6a48"/></svg>
<div class="a w" style="left:834px;width:185px;text-align:right;top:694px;color:#fff;line-height:17px;letter-spacing:-0.2px">Windows 10 Pro</div>
<div class="a w" style="left:739px;top:712px;color:#fff;line-height:17px;letter-spacing:-0.1px">Evaluation copy. Build 19645</div><div class="a w" style="left:900px;width:118px;text-align:right;top:712px;color:#fff;line-height:17px">1731</div>
<div class="a" style="left:873px;top:708px;width:131px;height:20px;background:#fff;border:1px solid #767676"></div>
<div class="a w" style="left:880px;top:709px;color:#575757;line-height:17px;font-size:11.4px">Monday, June 29, 2020</div>
<div class="a" style="left:0;top:728px;width:1024px;height:40px;background:#00111f"></div>
<svg class="a" style="left:15px;top:739px" width="18" height="18" viewBox="0 0 18 18"><path d="M0.5 2.5L7 1.6V8.2H0.5Z M8 1.5L17 0.3V8.2H8Z M0.5 9.2H7V15.8L0.5 15Z M8 9.2H17V17L8 15.9Z" fill="#fff"/></svg>
<div class="a" style="left:48px;top:728px;width:320px;height:39px;background:#f2f2f2"></div>
<svg class="a" style="left:59px;top:738px" width="20" height="20" viewBox="0 0 20 20"><circle cx="12" cy="8" r="6" stroke="#111" stroke-width="1.4" fill="none"/><path d="M7.8 12.2L1.5 18.5" stroke="#111" stroke-width="1.6"/></svg>
<div class="a w" style="left:88px;top:739px;color:#222;font-size:14.5px;line-height:18px">Type here to search</div>
<div class="a" style="left:384px;top:740px;width:16px;height:16px;border:2px solid #fff;border-radius:50%"></div>
<svg class="a" style="left:424px;top:732px" width="32" height="32" viewBox="0 0 32 32"><path d="M8.5 8V10.5H18.5V8M8.5 12.5H18.5V18.5H8.5Z M8.5 23V20.5H18.5V23M22.5 8V10.5M22.5 16.5V23" stroke="#fff" stroke-width="1.2" fill="none"/><rect x="21" y="12" width="3" height="3" fill="#fff"/></svg>
<svg class="a" style="left:474px;top:731px" width="34" height="34" viewBox="0 0 48 48"><path d="M9 21.5 C11 13 18 9 25.5 9 C33 9 38 14 38 21 L38 26 L21.5 26 C22.5 30 25.5 32 29.5 32 C32 32 34.5 31.5 36.5 30.3 L36.5 36.5 C33.5 38.5 30.5 39 27 39 C18 39 12.5 34 12.5 27 C12.5 23 14.5 19.5 18.5 17 C19 18 19 19 19 20.5 L29 20.5 C29 17 27 15 24 15 C18 15 12 17 9 21.5 Z" fill="#1a7ee6"/></svg>
<div class="a" style="left:516px;top:728px;width:48px;height:40px;background:#36444f"></div>
<div class="a" style="left:516px;top:766px;width:48px;height:2px;background:#7ab9ec"></div>
<svg class="a" style="left:529px;top:739px" width="22" height="18" viewBox="0 0 22 18"><path d="M0 0H8L10 2H22V18H0Z" fill="#f0b93a"/><path d="M0 4H22V18H0Z" fill="#ffd86e"/><path d="M5 10H17V18H14V13H8V18H5Z" fill="#2f8de4"/></svg>
<svg class="a" style="left:576px;top:736px" width="25" height="23" viewBox="0 0 25 23"><path d="M8 7V4.5A4.5 4.5 0 0 1 17 4.5V7" stroke="#fff" stroke-width="1.4" fill="none"/><path d="M1 6H24V21C24 22 23 23 22 23H3C2 23 1 22 1 21Z" fill="#fff"/><rect x="7" y="9" width="5" height="5" fill="#f25022"/><rect x="13" y="9" width="5" height="5" fill="#7fba00"/><rect x="7" y="15" width="5" height="5" fill="#00a4ef"/><rect x="13" y="15" width="5" height="5" fill="#ffb900"/></svg>
<svg class="a" style="left:626px;top:736px" width="24" height="23" viewBox="0 0 24 23"><path d="M0 8L12 0L24 8Z" fill="#1666c4"/><path d="M0 8H24V23H0Z" fill="#2f98e6"/><path d="M0 23L24 10V23Z" fill="#47acf0"/><path d="M2.5 8H21.5L12 14.5Z" fill="#f2f2f2"/></svg>
<svg class="a" style="left:675px;top:738px" width="23" height="19" viewBox="0 0 23 19"><rect x="0.5" y="0.5" width="22" height="18" fill="#000" stroke="#8a8a8a"/><rect x="1" y="1" width="21" height="2" fill="#c8c8c8"/><text x="2.5" y="10" font-family="Liberation Mono" font-size="7" fill="#fff">C:\</text><rect x="12" y="8" width="6" height="1.2" fill="#fff"/></svg>
<div class="a" style="left:667px;top:766px;width:40px;height:2px;background:#7ab9ec"></div>
<svg class="a" style="left:816px;top:743px" width="14" height="9" viewBox="0 0 14 9"><path d="M1 8L7 2L13 8" stroke="#fff" stroke-width="1.4" fill="none"/></svg>
<svg class="a" style="left:839px;top:743px" width="17" height="11" viewBox="0 0 17 11"><path d="M3 10.5C1.3 10.5 0.3 9.2 0.3 7.8C0.3 6.3 1.5 5.2 3 5.2C3.5 2.5 5.5 0.8 8 0.8C10 0.8 11.7 2 12.4 3.8C15 3.8 16.7 5.8 16.7 7.8C16.7 9.5 15.5 10.5 13.8 10.5Z" fill="#c8c8c8"/><path d="M3 10.5C1.5 10.5 0.5 9.5 0.5 8.3L8 6C10 5.3 12.5 5.5 16.6 8C16.5 9.6 15.4 10.5 13.8 10.5Z" fill="#f2f2f2"/></svg>
<svg class="a" style="left:862px;top:740px" width="19" height="17" viewBox="0 0 19 17"><path d="M3.5 2.5H16.5V11.5H3.5Z M9.5 12V14.5M6 14.5H13M3.5 7V15" stroke="#fff" stroke-width="1" fill="none"/><rect x="1.5" y="2.5" width="4" height="4.5" fill="#00111f" stroke="#fff" stroke-width="1"/><path d="M2.5 4L3.5 5L4.5 4" stroke="#fff" stroke-width=".8" fill="none"/></svg>
<svg class="a" style="left:886px;top:741px" width="18" height="16" viewBox="0 0 18 16"><path d="M1.5 5H3.5L7 1.5V13.5L3.5 10H1.5Z" stroke="#fff" fill="none"/><circle cx="12.7" cy="10.5" r="4.6" fill="#d9433a"/><path d="M10.7 8.5L14.7 12.5M14.7 8.5L10.7 12.5" stroke="#f0e0d0" stroke-width="1.2"/></svg>
<div class="a" style="left:907px;top:730px;width:64px;height:38px;background:#1b2231"></div>
<div class="a w" style="left:907px;top:731px;width:64px;text-align:center;color:#fff;line-height:17px">9:35 AM</div>
<div class="a w" style="left:907px;top:749px;width:64px;text-align:center;color:#fff;line-height:17px">6/29/2020</div>
<svg class="a" style="left:974px;top:732px" width="40" height="36" viewBox="0 0 40 36"><path d="M9 8H25V21H17L15.5 23.5V21H9Z" fill="#fff"/><path d="M12 11.5H22M12 14.5H22M12 17.5H18" stroke="#00111f" stroke-width="1.1"/><circle cx="24.7" cy="23.4" r="9.3" fill="#00111f"/><circle cx="24.7" cy="23.4" r="7.8" fill="#1f2630" stroke="#909090" stroke-width="1"/><text x="24.7" y="27" text-anchor="middle" font-family="Liberation Sans" font-weight="bold" font-size="11.5" fill="#fff">3</text></svg>
<div class="a" style="left:1019px;top:728px;width:1px;height:40px;background:#7a7a7a"></div>
<div class="a" style="left:1022px;top:0;width:1px;height:728px;background:#0a52d0"></div><div class="a" style="left:1023px;top:0;width:1px;height:768px;background:#000"></div><div class="a" style="left:0;top:767px;width:1024px;height:1px;background:#000"></div>
</body></html>
